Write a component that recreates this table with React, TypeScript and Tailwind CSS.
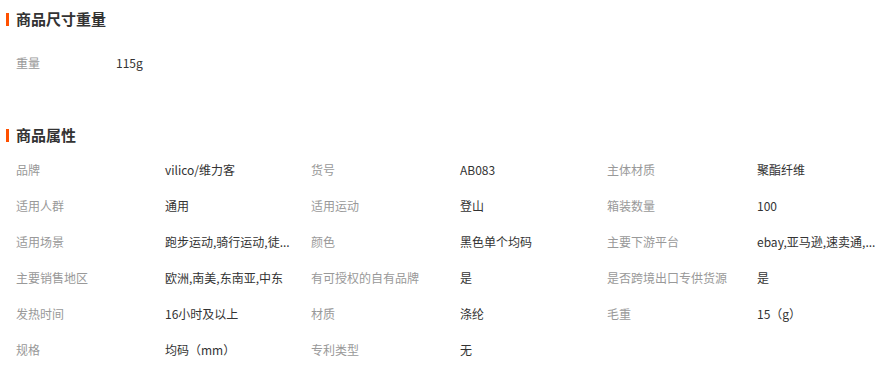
const attrs: [string, string][] = [
  ["品牌", "vilico/维力客"],
  ["货号", "AB083"],
  ["主体材质", "聚酯纤维"],
  ["适用人群", "通用"],
  ["适用运动", "登山"],
  ["箱装数量", "100"],
  ["适用场景", "跑步运动,骑行运动,徒..."],
  ["颜色", "黑色单个均码"],
  ["主要下游平台", "ebay,亚马逊,速卖通,..."],
  ["主要销售地区", "欧洲,南美,东南亚,中东"],
  ["有可授权的自有品牌", "是"],
  ["是否跨境出口专供货源", "是"],
  ["发热时间", "16小时及以上"],
  ["材质", "涤纶"],
  ["毛重", "15（g）"],
  ["规格", "均码（mm）"],
  ["专利类型", "无"],
  ["", ""],
];

const Title = ({ text }: { text: string }) => (
  <div className="flex items-center h-[18px]">
    <div className="w-[3px] h-[13px] bg-[#ff5000] ml-[6px] mr-[7px]"></div>
    <h2 className="text-[15px] font-bold text-[#333] leading-[18px]">{text}</h2>
  </div>
);

const App = () => {
  return (
    <div
      className="w-[887px] h-[376px] bg-white overflow-hidden pt-[10px]"
      style={{ fontFamily: '"Microsoft YaHei", "Noto Sans CJK SC", sans-serif' }}
    >
      {/* 商品尺寸重量 */}
      <Title text="商品尺寸重量" />
      <div className="flex items-center h-[36px] mt-[17px] pl-[16px] text-[12px]">
        <span className="w-[100px] text-[#999]">重量</span>
        <span className="text-[#333]">115g</span>
      </div>
      {/* 商品属性 */}
      <div className="mt-[45px]">
        <Title text="商品属性" />
      </div>
      <div className="grid grid-cols-[149px_146px_149px_147px_150px_1fr] pl-[16px] mt-[8px] text-[12px]">
        {attrs.map(([k, v], i) => (
          <div key={i} className="contents">
            <div className="h-[36px] flex items-center text-[#999] whitespace-nowrap">{k}</div>
            <div className="h-[36px] flex items-center text-[#333] whitespace-nowrap">{v}</div>
          </div>
        ))}
      </div>
    </div>
  );
};

export default App;
